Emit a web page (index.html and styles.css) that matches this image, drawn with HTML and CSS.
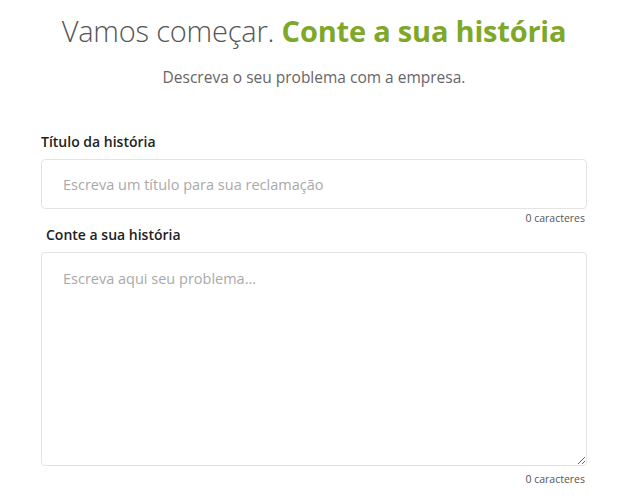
FILE: index.html
```html
<!DOCTYPE html>
<html lang="pt-BR">
<head>
	<meta charset="UTF-8">
	<title>Conte a sua história</title>
	<link rel="stylesheet" href="styles.css">
</head>
<body>
	<div class="box">
		<h1 class="titulo">Vamos começar. <strong>Conte a sua história</strong></h1>
		<p class="sub">Descreva o seu problema com a empresa.</p>

		<label class="rotulo" for="tit">Título da história</label>
		<input class="campo" id="tit" type="text" placeholder="Escreva um título para sua reclamação">
		<div class="conta">0 caracteres</div>

		<label class="rotulo rotulo2" for="hist">Conte a sua história</label>
		<textarea class="campo area" id="hist" placeholder="Escreva aqui seu problema..."></textarea>
		<div class="conta conta2">0 caracteres</div>
	</div>
</body>
</html>
```

FILE: styles.css
```css
body,h1,p{ margin: 0;padding: 0; }
body{ background: #fff; font-family: "Open Sans", "Liberation Sans", sans-serif; color: #333; }

.box{ width: 546px; margin-left: 41px; display: flex; flex-direction: column; }
.titulo{ font-size: 29px; font-weight: 300; color: #555; text-align: center; line-height: 40px; margin-top: 11px; letter-spacing: -0.2px; }
.titulo strong{ font-weight: 700; color: #7fa829; }
.sub{ font-size: 15.5px; font-weight: 400; color: #666; text-align: center; margin-top: 15px; line-height: 22px; }

.rotulo{ font-size: 14px; font-weight: 600; color: #222; margin-top: 44px; line-height: 20px; }
.rotulo2{ margin-top: 0; padding-left: 5px; }

.campo{ box-sizing: border-box; width: 546px; height: 50px; margin-top: 7px; border: 1px solid #e3e3e3; border-radius: 4px; padding: 0 21px; font-family: "Open Sans", "Liberation Sans", sans-serif; font-size: 14.5px; color: #333; outline: none; }
.campo::placeholder{ color: #a9a9a9; }
.area{ height: 214px; margin-top: 7px; padding: 16px 21px; resize: vertical; }

.conta{ font-size: 10.5px; color: #555; text-align: right; padding-right: 2px; line-height: 14px; margin-top: 2px; }
.conta2{ margin-top: 6px; }
```
